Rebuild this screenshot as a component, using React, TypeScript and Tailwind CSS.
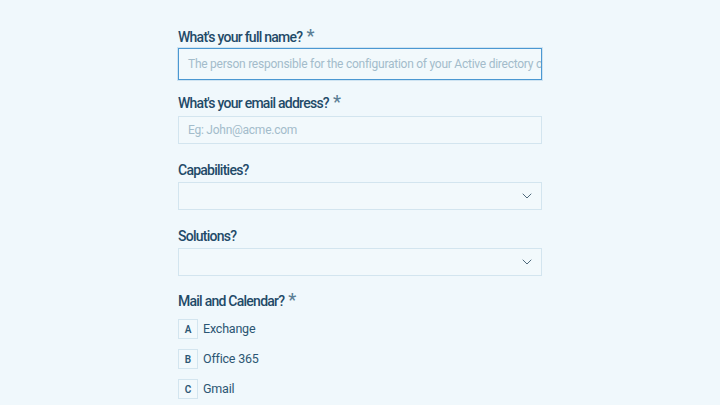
import { ChevronDown } from "lucide-react"

function Label({ text, required }: { text: string; required?: boolean }) {
  return (
    <div className="flex h-[16px] items-start text-[14px] font-medium leading-[16px] tracking-[-0.75px] text-[#1f4a68]">
      <span>{text}</span>
      {required && <span className="ml-[4px] text-[18px] leading-[14px] text-[#5c7f96]">*</span>}
    </div>
  )
}

function Select() {
  return (
    <div className="flex h-[28px] items-center justify-end border border-[#d3e5ef] bg-[#f2f9fc] pr-[6px]">
      <ChevronDown className="h-[16px] w-[16px] text-[#4f6a7c]" strokeWidth={1.5} />
    </div>
  )
}

const options = [
  { key: "A", label: "Exchange" },
  { key: "B", label: "Office 365" },
  { key: "C", label: "Gmail" },
]

export default function App() {
  return (
    <div
      className="h-[405px] w-[720px] overflow-hidden bg-[#f0f8fc]"
      style={{ fontFamily: "Roboto, 'Liberation Sans', sans-serif" }}
    >
      <div className="ml-[178px] w-[364px] pt-[29px]">
        <Label text="What's your full name?" required />
        <div className="mt-[3px] flex h-[32px] items-center overflow-hidden whitespace-nowrap border-[1.5px] border-[#4b98d2] bg-[#f2f9fc] px-[9px] text-[12px] tracking-[-0.25px] text-[#a3bccb] shadow-[0_0_0_1px_#cfe4f2]">
          The person responsible for the configuration of your Active directory or
        </div>

        <div className="mt-[15px]">
          <Label text="What's your email address?" required />
        </div>
        <div className="mt-[5px] flex h-[28px] items-center border border-[#d3e5ef] bg-[#f2f9fc] px-[9px] text-[12px] tracking-[-0.25px] text-[#a3bccb]">
          Eg: John@acme.com
        </div>

        <div className="mt-[18px]">
          <Label text="Capabilities?" />
        </div>
        <div className="mt-[4px]">
          <Select />
        </div>

        <div className="mt-[18px]">
          <Label text="Solutions?" />
        </div>
        <div className="mt-[4px]">
          <Select />
        </div>

        <div className="mt-[17px]">
          <Label text="Mail and Calendar?" required />
        </div>
        <div className="mt-[10px] flex flex-col gap-[10px]">
          {options.map((o) => (
            <div key={o.key} className="flex items-center">
              <div className="flex h-[20px] w-[20px] items-center justify-center border border-[#d3e5ef] bg-[#f2f9fc] text-[10px] font-semibold text-[#2c5673]">
                {o.key}
              </div>
              <span className="ml-[5px] text-[12.5px] tracking-[-0.2px] text-[#2c5673]">{o.label}</span>
            </div>
          ))}
        </div>
      </div>
    </div>
  )
}
